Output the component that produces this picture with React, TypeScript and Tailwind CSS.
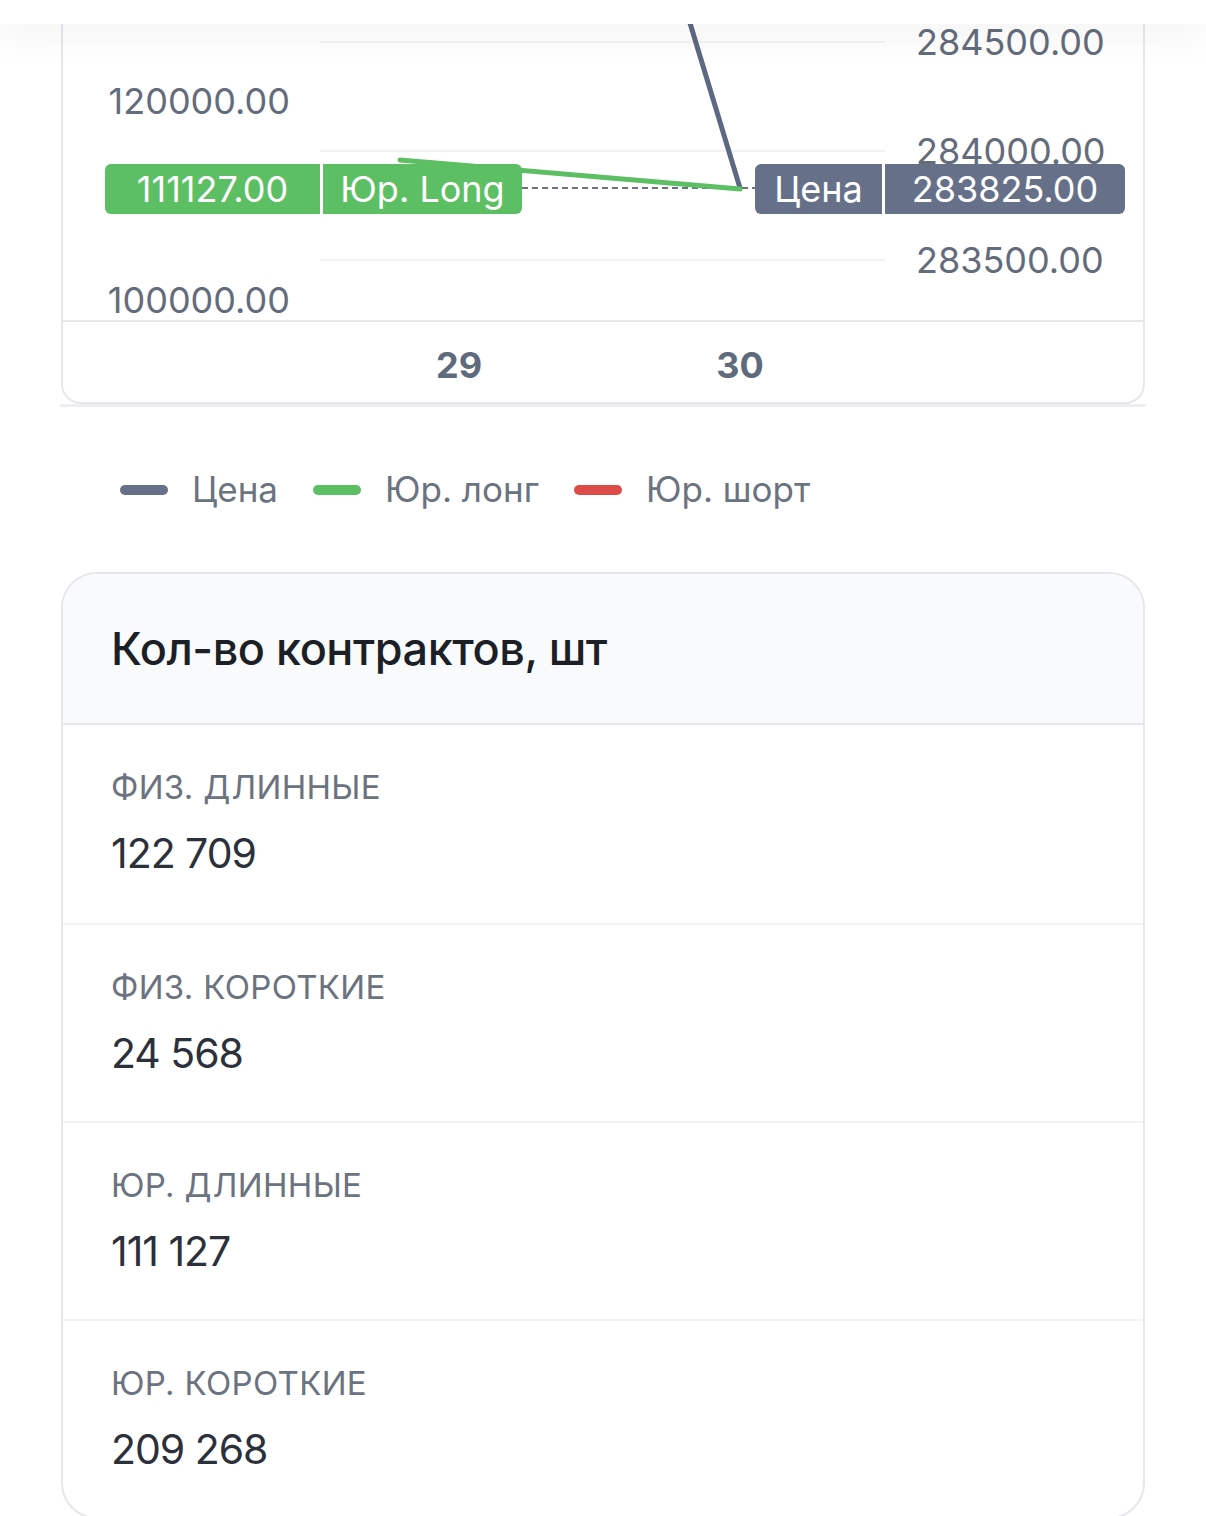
import React from 'react';

const GREEN = '#5cbf63';

const leftTicks = [
  { label: '120000.00', top: 57 },
  { label: '100000.00', top: 256 },
];

const rightTicks = [
  { label: '284500.00', top: -2 },
  { label: '284000.00', top: 107 },
  { label: '283500.00', top: 216 },
];

const legend = [
  { label: 'Цена', color: 'bg-[#667189]' },
  { label: 'Юр. лонг', color: 'bg-[#5cbf63]' },
  { label: 'Юр. шорт', color: 'bg-[#dc4b48]' },
];

const stats = [
  { label: 'Физ. длинные', value: '122 709' },
  { label: 'Физ. короткие', value: '24 568' },
  { label: 'Юр. длинные', value: '111 127' },
  { label: 'Юр. короткие', value: '209 268' },
];

function PriceChart() {
  return (
    <div className="border-b-[3px] border-[#eceef1] mx-[60px]">
      <div className="mx-px border-2 border-t-0 border-[#e5e7eb] rounded-b-[20px] bg-white">
        {/* plot body: grid, series, axis labels */}
        <div className="relative h-[296px]">
          <svg className="absolute inset-0 w-full h-full overflow-visible" viewBox="0 0 1080 296">
            {[18, 127, 236].map((y) => (
              <line key={y} x1={257} x2={822} y1={y} y2={y} stroke="#f1f2f5" strokeWidth={2} />
            ))}
            <line x1={459} x2={692} y1={164} y2={164} stroke="#6b7280" strokeWidth={2} strokeDasharray="6 4" />
            <line x1={620} y1={-24} x2={677} y2={164} stroke="#5d6882" strokeWidth={5} strokeLinecap="round" />
            <line x1={337} y1={136} x2={677} y2={165} stroke={GREEN} strokeWidth={5} strokeLinecap="round" />
          </svg>

          {leftTicks.map((t) => (
            <div
              key={t.label}
              className="absolute left-0 w-[227px] text-right text-[36px] leading-[40px] text-[#646b7a]"
              style={{ top: t.top }}
            >
              {t.label}
            </div>
          ))}
          {rightTicks.map((t) => (
            <div
              key={t.label}
              className="absolute left-[853px] text-[36px] leading-[40px] text-[#646b7a]"
              style={{ top: t.top }}
            >
              {t.label}
            </div>
          ))}

          {/* last value markers */}
          <div className="absolute left-[42px] top-[140px] flex h-[50px] gap-[3px] text-white text-[36px]">
            <div className="w-[215px] flex items-center justify-center rounded-l-[6px] bg-[#5cbf63]">111127.00</div>
            <div className="w-[199px] flex items-center justify-center rounded-r-[6px] bg-[#5cbf63]">Юр. Long</div>
          </div>
          <div className="absolute left-[692px] top-[140px] flex h-[50px] gap-[3px] text-white text-[36px]">
            <div className="w-[127px] flex items-center justify-center rounded-l-[6px] bg-[#667189]">Цена</div>
            <div className="w-[240px] flex items-center justify-center rounded-r-[6px] bg-[#667189]">283825.00</div>
          </div>
        </div>

        {/* time axis */}
        <div className="relative h-[82px] border-t-2 border-[#e5e7eb]">
          {[
            { label: '29', left: 396 },
            { label: '30', left: 677 },
          ].map((d) => (
            <div
              key={d.label}
              className="absolute top-[23px] w-[80px] -ml-[40px] text-center text-[36px] leading-[40px] font-bold text-[#5f6a7d]"
              style={{ left: d.left }}
            >
              {d.label}
            </div>
          ))}
        </div>
      </div>
    </div>
  );
}

function Legend() {
  return (
    <div className="flex items-center gap-[35px] pl-[120px] h-[165px]">
      {legend.map((item) => (
        <div key={item.label} className="flex items-center gap-[24px]">
          <span className={`block w-[48px] h-[10px] rounded-full ${item.color}`} />
          <span className="text-[35px] text-[#6b7280]">{item.label}</span>
        </div>
      ))}
    </div>
  );
}

function ContractsCard() {
  return (
    <div className="mx-[61px] border-2 border-[#e5e7eb] rounded-[36px] overflow-hidden bg-white">
      <div className="h-[151px] flex items-center px-[48px] bg-[#f8fafc] border-b-2 border-[#e5e7eb]">
        <h2 className="text-[45px] font-medium text-[#1c1f26] tracking-[-0.01em]">Кол-во контрактов, шт</h2>
      </div>
      {stats.map((s, i) => (
        <div
          key={s.label}
          className={`h-[198px] px-[48px] pt-[42px] ${i > 0 ? 'border-t-2 border-[#f1f2f4]' : ''}`}
        >
          <div className="text-[33px] leading-[40px] uppercase tracking-[0.01em] text-[#6b7280]">{s.label}</div>
          <div className="mt-[21px] text-[41px] leading-[50px] tracking-[-0.025em] text-[#2b303b]">{s.value}</div>
        </div>
      ))}
    </div>
  );
}

export default function App() {
  return (
    <div className="w-[1206px] h-[1516px] overflow-hidden bg-white font-['Inter',sans-serif]">
      <div className="relative z-10 h-[24px] bg-white shadow-[0_8px_40px_rgba(15,23,42,0.07)]" />
      <PriceChart />
      <Legend />
      <ContractsCard />
    </div>
  );
}
